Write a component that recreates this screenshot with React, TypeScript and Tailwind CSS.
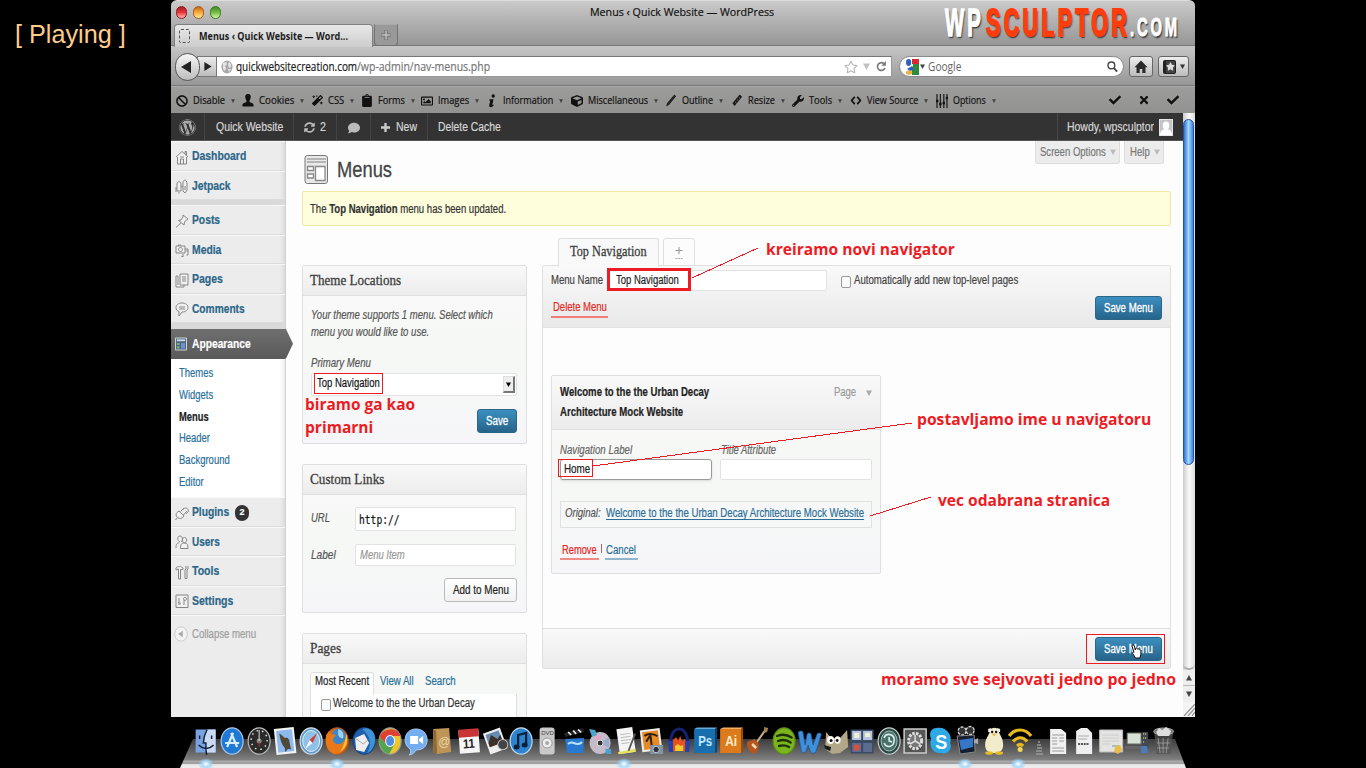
import React, { useLayoutEffect, useRef } from 'react';
import {
  FaBan, FaMagic, FaClipboard, FaRegImage, FaCube, FaWrench, FaCheck, FaTimes,
  FaWordpress, FaRegStar, FaSyncAlt, FaComment, FaStar,
} from 'react-icons/fa';

/* Single line of text condensed to the width of its own box. */
function Fit({ className = '', children }: { className?: string; children: React.ReactNode }) {
  const outer = useRef<HTMLSpanElement>(null);
  const inner = useRef<HTMLSpanElement>(null);
  useLayoutEffect(() => {
    const o = outer.current;
    const i = inner.current;
    if (o && i && i.offsetWidth > 0) {
      i.style.transform = `scaleX(${o.offsetWidth / i.offsetWidth})`;
    }
  }, [children]);
  return (
    <span ref={outer} className={`block shrink-0 whitespace-nowrap text-left ${className}`}>
      <span ref={inner} className="block w-max origin-left">{children}</span>
    </span>
  );
}

const Tri = ({ className = '' }: { className?: string }) => (
  <svg viewBox="0 0 6 6" className={`shrink-0 ${className}`}><path d="M0 0.5h6L3 6z" fill="currentColor" /></svg>
);

/* ---------- browser chrome ---------- */

const light = 'h-[13px] w-[11px] rounded-full border';

function TitleBar() {
  return (
    <div className="relative h-[46px] rounded-t-[6px] border-b border-[#777] border-t border-t-[#dedede] bg-linear-to-b from-[#cacaca] to-[#969696]">
      <div className="flex h-[22px] items-center pl-[5px]">
        <div className="flex w-[414px] gap-[6px]">
          <span className={`${light} border-[#8c1a1c] bg-linear-to-b from-[#a81e22] via-[#e8353b] to-[#ffb3b3]`} />
          <span className={`${light} border-[#a55b16] bg-linear-to-b from-[#c8661b] via-[#f9a93a] to-[#ffef9a]`} />
          <span className={`${light} border-[#3c7a1d] bg-linear-to-b from-[#3f8a26] via-[#76bf45] to-[#d5f5a5]`} />
        </div>
        <Fit className="w-[184px] font-['Open_Sans'] text-[11.5px] font-medium text-[#111] [-webkit-text-stroke:.2px_#111]">Menus ‹ Quick Website — WordPress</Fit>
      </div>
      <div className="flex h-[23px] pl-[3px]">
        <div className="mt-px flex h-[23px] w-[199px] items-center gap-[9px] rounded-t-[4px] border border-b-0 border-[#808080] bg-linear-to-b from-[#e8e8e8] to-[#cdcdcd] pl-[4px]">
          <span className="h-[14px] w-[11px] rounded-[2px] border border-dashed border-[#555]" />
          <Fit className="w-[149px] font-['Open_Sans'] text-[11px] font-bold text-[#1c1c1c]">Menus ‹ Quick Website — Word...</Fit>
        </div>
        <div className="mt-px ml-px flex h-[22px] w-[24px] items-center justify-center rounded-b-[4px] border border-t-[#aaa] border-[#737373] bg-[#999]">
          <svg viewBox="0 0 10 10" className="size-[10px]"><path d="M3.8 0h2.4v3.800H10v2.400H6.200V10H3.800V6.200H0V3.800h3.800z" fill="#bdbdbd" stroke="#555" strokeWidth=".6" /></svg>
        </div>
      </div>
      <div className="absolute left-[774px] top-0 flex items-baseline font-bold [text-shadow:2px_2px_2px_rgba(0,0,0,.7)]">
        <Fit className="mr-[2px] w-[39px] text-[38px] leading-[44px] tracking-[6px] text-white [-webkit-text-stroke:1.5px_#fff]">WP</Fit>
        <Fit className="w-[144px] text-[38px] leading-[44px] tracking-[6px] text-[#ff3d0c] [-webkit-text-stroke:2px_#ff3d0c]">SCULPTOR</Fit>
        <Fit className="w-[50px] text-[26px] leading-[30px] tracking-[5px] text-white [-webkit-text-stroke:1px_#fff]">.COM</Fit>
      </div>
    </div>
  );
}

function NavBar() {
  return (
    <div className="flex h-[40px] items-center border-b border-[#777] bg-linear-to-b from-[#c6c6c6] to-[#979797] pl-[4px] pt-[2px]">
      <div className="z-10 flex h-[28px] w-[25px] items-center justify-center rounded-full border border-[#555] bg-linear-to-b from-[#f6f6f6] to-[#bdbdbd] text-[#222]">
        <svg viewBox="0 0 10 12" className="mr-[3px] h-[14px] w-[10px]"><path d="M10 0v12L0 6z" fill="currentColor" /></svg>
      </div>
      <div className="-ml-[3px] flex h-[21px] w-[20px] items-center justify-center border border-[#777] bg-linear-to-b from-[#ededed] to-[#bcbcbc] text-[#222]">
        <svg viewBox="0 0 8 10" className="ml-[2px] h-[9px] w-[8px]"><path d="M0 0v10l8-5z" fill="currentColor" /></svg>
      </div>
      <div className="flex h-[21px] w-[675px] items-center border border-l-0 border-[#999] border-t-[#777] bg-white pl-[4px]">
        <svg viewBox="0 0 12 14" className="mr-[3px] h-[14px] w-[12px]">
          <ellipse cx="6" cy="7" rx="5.6" ry="6.4" fill="#a9a9a9" />
          <path d="M2 3l3-1 1 2-2 2 1 2-1 3-2-2zM8 2l2 2v3L8 8 7 5zM7 9l3 0-2 3z" fill="#e5e5e5" />
        </svg>
        <Fit className="mt-px w-[121px] font-['Open_Sans'] text-[12px] text-[#1b1b1b] [-webkit-text-stroke:.2px_#1b1b1b]">quickwebsitecreation.com</Fit>
        <Fit className="mt-px w-[133px] font-['Open_Sans'] text-[12px] text-[#777] [-webkit-text-stroke:.2px_#777]">/wp-admin/nav-menus.php</Fit>
        <div className="ml-auto flex items-center gap-[5px] pr-[4px]">
          <FaRegStar className="size-[14px] text-[#b9b9b9]" />
          <Tri className="size-[7px] text-[#c2c2c2]" />
          <svg viewBox="0 0 12 12" className="ml-px size-[11px]"><path d="M9.7 7.6A4.2 4.2 0 1 1 8.6 2.9" fill="none" stroke="#777" strokeWidth="1.8" /><path d="M10.8 0v5.2H5.9z" fill="#777" /></svg>
        </div>
      </div>
      <div className="ml-[7px] flex h-[21px] w-[225px] items-center rounded-full border border-[#888] bg-white pl-[5px]">
        <svg viewBox="0 0 14 16" className="h-[16px] w-[14px]">
          <path d="M7 0h7v5H7z" fill="#d8292f" /><path d="M8 5h6v11H7V8z" fill="#2d8c3c" />
          <path d="M0 3l5 8 3-4-3-6z" fill="#fff" /><ellipse cx="3.6" cy="3.5" rx="2.6" ry="3.4" fill="#2f5fc0" /><path d="M2 10l5-3 2 4-4 1z" fill="#2f5fc0" />
          <ellipse cx="4" cy="13.6" rx="3.2" ry="2.2" fill="#edb13a" />
        </svg>
        <Tri className="ml-px size-[5px] text-[#444]" />
        <Fit className="ml-[3px] mt-px w-[33px] font-['Open_Sans'] text-[12px] text-[#666]">Google</Fit>
        <svg viewBox="0 0 12 12" className="ml-auto mr-[5px] size-[11px]"><circle cx="4.8" cy="4.8" r="3.7" fill="none" stroke="#444" strokeWidth="1.5" /><path d="M7.4 7.6l3.6 4" stroke="#444" strokeWidth="2" /></svg>
      </div>
      <div className="ml-[5px] flex h-[21px] w-[24px] items-center justify-center rounded-[3px] border border-[#666] bg-linear-to-b from-[#eee] to-[#bcbcbc]">
        <svg viewBox="0 0 14 14" className="size-[14px]"><path d="M7 .5l6.500 6.700h-2V13H8.300V9H5.700v4H2.500V7.200h-2z" fill="#2a2a2a" /></svg>
      </div>
      <div className="ml-[5px] flex h-[21px] w-[31px] items-center justify-center gap-[4px] rounded-[3px] border border-[#666] bg-linear-to-b from-[#eee] to-[#bcbcbc]">
        <span className="flex h-[14px] w-[13px] items-center justify-center rounded-[2px] border border-l-3 border-[#222] bg-[#444]"><FaStar className="size-[9px] text-[#ddd]" /></span>
        <Tri className="size-[5px] text-[#333]" />
      </div>
    </div>
  );
}

const InfoIcon = () => <svg viewBox="0 0 12 14" className="h-[14px] w-[12px]"><circle cx="7.2" cy="2" r="1.7" fill="#111" /><path d="M3.5 5.2h4L6.2 11l1.5-.4-.3 1.2C6 13.6 3 13.8 3.2 11.6L4.3 6.6l-1 .2z" fill="#111" /></svg>;
const RulerIcon = () => <svg viewBox="0 0 12 14" className="h-[13px] w-[12px]"><path d="M1 10L9 .5 11.5 3 3.5 13z" fill="#1a1a1a" /><path d="M4 8.5l1.5 1.4M6 6l1.5 1.4M8 3.8L9.4 5" stroke="#999" strokeWidth=".8" /></svg>;
const SlidersIcon = () => <svg viewBox="0 0 12 14" className="h-[14px] w-[12px]"><path d="M1 0v14M4.4 0v14M7.8 0v14M11 0v14" stroke="#222" strokeWidth="1.3" /><path d="M0 7h2.4M3.2 10h2.4M6.6 9h2.4M9.8 4H12" stroke="#111" strokeWidth="2.4" /></svg>;
const PencilIcon = () => <svg viewBox="0 0 12 14" className="h-[13px] w-[12px]"><path d="M0.6 13.4l1.3-3.6L9.6.6l1.9 1.8-7.7 9.4z" fill="#222" /></svg>;
const PersonIcon = () => <svg viewBox="0 0 12 14" className="h-[13px] w-[12px]"><path d="M6 0c2.600 0 3.400 2.200 2.800 4.400C8.500 6 7.500 6.600 7.600 8.600c1.200 1 4.200.8 4.400 3.400v1.500H0V12c.2-2.600 3.200-2.400 4.400-3.400C4.500 6.600 3.500 6 3.200 4.400 2.600 2.200 3.400 0 6 0z" fill="#111" /></svg>;
const CodeIcon = () => <svg viewBox="0 0 12 10" className="h-[9px] w-[12px]"><path d="M4.600 1L1.200 5l3.400 4M7.400 1l3.400 4-3.400 4" fill="none" stroke="#111" strokeWidth="1.900" /></svg>;

const devItems = [
  { label: 'Disable', item: 'w-[66px]', text: 'w-[32px]', icon: <FaBan className="size-[12px]" /> },
  { label: 'Cookies', item: 'w-[69px]', text: 'w-[35px]', icon: <PersonIcon /> },
  { label: 'CSS', item: 'w-[50px]', text: 'w-[16px]', icon: <FaMagic className="size-[11px]" /> },
  { label: 'Forms', item: 'w-[60px]', text: 'w-[27px]', icon: <FaClipboard className="h-[13px] w-[12px]" /> },
  { label: 'Images', item: 'w-[65px]', text: 'w-[31px]', icon: <FaRegImage className="size-[12px]" /> },
  { label: 'Information', item: 'w-[85px]', text: 'w-[50px]', icon: <InfoIcon /> },
  { label: 'Miscellaneous', item: 'w-[94px]', text: 'w-[60px]', icon: <FaCube className="size-[12px]" /> },
  { label: 'Outline', item: 'w-[66px]', text: 'w-[31px]', icon: <PencilIcon /> },
  { label: 'Resize', item: 'w-[61px]', text: 'w-[27px]', icon: <RulerIcon /> },
  { label: 'Tools', item: 'w-[58px]', text: 'w-[23px]', icon: <FaWrench className="size-[12px]" /> },
  { label: 'View Source', item: 'w-[86px]', text: 'w-[51px]', icon: <CodeIcon /> },
  { label: 'Options', item: 'w-[65px]', text: 'w-[33px]', icon: <SlidersIcon /> },
];

function DevBar() {
  return (
    <div className="flex h-[27px] items-center border-t border-[#aaa] bg-linear-to-b from-[#9c9c9a] to-[#929290] pl-[5px] text-[#111]">
      {devItems.map((d) => (
        <div key={d.label} className={`flex shrink-0 items-center pt-px ${d.item}`}>
          <span className="mr-[5px] flex w-[12px] justify-center">{d.icon}</span>
          <Fit className={`font-['Open_Sans'] text-[10.5px] font-medium [-webkit-text-stroke:.2px_#111] ${d.text}`}>{d.label}</Fit>
          <Tri className="ml-[6px] size-[4px] text-[#444]" />
        </div>
      ))}
      <div className="ml-auto flex items-center gap-[17px] pr-[16px]">
        <FaCheck className="size-[12px]" /><FaTimes className="size-[12px]" /><FaCheck className="size-[12px]" />
      </div>
    </div>
  );
}

/* ---------- WordPress ---------- */

function AdminBar() {
  const cell = 'flex h-full shrink-0 items-center border-r border-[#444] pt-[2px]';
  return (
    <div className="flex h-[28px] shrink-0 items-center border-b border-[#555] bg-[#333] text-[12.5px] text-[#d6d6d6]">
      <div className={`${cell} w-[34px] justify-center`}><FaWordpress className="h-[19px] w-[17px] text-[#aaa]" /></div>
      <div className={`${cell} w-[89px] pl-[11px]`}><Fit className="w-[67px]">Quick Website</Fit></div>
      <div className={`${cell} w-[43px] gap-[5px] pl-[10px]`}><FaSyncAlt className="size-[11px] text-[#bbb]" /><Fit className="w-[6px]">2</Fit></div>
      <div className={`${cell} w-[34px] justify-center`}><FaComment className="mt-px h-[14px] w-[12px] text-[#bbb]" /></div>
      <div className={`${cell} w-[57px] pl-[10px]`}>
        <svg viewBox="0 0 10 10" className="mr-[6px] size-[9px]"><path d="M5 0v10M0 5h10" stroke="#ccc" strokeWidth="2.6" /></svg>
        <Fit className="w-[21px]">New</Fit>
      </div>
      <Fit className="ml-[10px] w-[63px] pt-[2px]">Delete Cache</Fit>
      <div className="ml-auto flex h-full w-[126px] items-center border-l border-[#484848] pl-[9px] pt-px">
        <Fit className="w-[87px]">Howdy, wpsculptor</Fit>
        <svg viewBox="0 0 14 17" className="ml-[5px] h-[17px] w-[14px]"><path d="M0 0h14v17H0z" fill="#c4c4c4" /><ellipse cx="7" cy="6.5" rx="3.3" ry="4" fill="#fff" /><path d="M1 16c0-4 2.500-6 6-6s6 2 6 6z" fill="#fff" /><path d="M.5.5h13v16H.5z" fill="none" stroke="#e6e6e6" /></svg>
      </div>
    </div>
  );
}

const ic = (d: string) => (
  <svg viewBox="0 0 14 16" className="h-[16px] w-[14px] shrink-0"><path d={d} fill="#f1f1f1" stroke="#858585" strokeWidth="1" strokeLinejoin="round" /></svg>
);
const icons: Record<string, React.ReactNode> = {
  Dashboard: ic('M1 8l6-5.500L13 8M2.500 8v7h9V8M5.500 15v-5h3v5M10 5V2.500h1.500v4M5 8h4'),
  Jetpack: ic('M2 6c0-3 4-3 4 0v7H2zM8 5c0-4 4-4 4 1v6l-2 3-2-2zM1 9v5M6 8l2 1M4 14v1.500M10 8v4'),
  Posts: ic('M8 2l5 4-1.500.8L9.500 9l-.5 3L3.500 7.500 6 7l2-3zM6 9.800L1 14.500'),
  Media: ic('M1 4h9v7H1zM3 3h3M5.500 5.500a2 2 0 1 0 .1 0M10 7h3v6M8 15v-3M8 14.500h-1.500M13 13h-1.500M11 9h2'),
  Pages: ic('M5 2h8v11H5zM3 4H1v11h8v-2M3 4v9M7 5h4M7 7h4M7 9h4'),
  Comments: ic('M7 2c3.500 0 6 2 6 4.500S10.500 11 7 11L4 15v-4.500C2 10 1 8.500 1 6.500 1 4 3.500 2 7 2zM4 6h6M4 8h6'),
  Plugins: ic('M4 6l5 5-2 2c-2 1-4 0-5-1s-1.500-3 0-4.500zM2 13l-1.500 2M5.500 6.500L9 3M8.500 10L12 6M8 4.500c2-2 4-2 5 0s0 3-2 4'),
  Users: ic('M5 8c-3-1-3-6 0-6s3 5 1 6M1 14c0-4 1-5 3-5M9.500 9c-3-1-2.500-5.500 0-5.500s3 4.500 0 5.500c3 0 3.500 2 3.500 5.500H5.500C5.500 11 6 9 9.500 9'),
  Tools: ic('M1 4c2-2 5-2 7 0v1.500H5.500V15H3.500V5L1 6zM11 2v3l-1 1v8.500h2V6l1-1V2'),
  Settings: ic('M1 2h12v12.500H1zM4 5v7M4 9.500h-1M5 9.500v2M9 7v5M9 7a1.500 1.500 0 1 0-.1-.1'),
};

type Entry = { label: string; w: string; sepBefore?: boolean };
const top1: Entry[] = [
  { label: 'Dashboard', w: 'w-[54px]' },
  { label: 'Jetpack', w: 'w-[39px]' },
  { label: 'Posts', w: 'w-[28px]', sepBefore: true },
  { label: 'Media', w: 'w-[29px]' },
  { label: 'Pages', w: 'w-[31px]' },
  { label: 'Comments', w: 'w-[53px]' },
];
const top2: Entry[] = [
  { label: 'Plugins', w: 'w-[37px]' },
  { label: 'Users', w: 'w-[28px]' },
  { label: 'Tools', w: 'w-[27px]' },
  { label: 'Settings', w: 'w-[41px]' },
];
const subs = [
  ['Themes', 'w-[34px]'], ['Widgets', 'w-[34px]'], ['Menus', 'w-[30px]'],
  ['Header', 'w-[31px]'], ['Background', 'w-[51px]'], ['Editor', 'w-[25px]'],
];

function SideItem({ e }: { e: Entry }) {
  return (
    <>
      {e.sepBefore && <div className="h-[5px] bg-[#d9d9d9]" />}
      <div className="flex h-[29.5px] items-center border-b border-b-[#dcdcdc] border-t border-t-[#f8f8f8] pl-[4px] pt-[2px]">
        {icons[e.label]}
        <Fit className={`ml-[3px] text-[12.5px] font-bold text-[#2b6688] ${e.w}`}>{e.label}</Fit>
        {e.label === 'Plugins' && <span className="ml-[6px] flex h-[16px] w-[14px] items-center justify-center rounded-full bg-[#333] text-[9px] font-bold text-white">2</span>}
      </div>
    </>
  );
}

function Sidebar() {
  return (
    <div className="relative z-10 w-[115px] shrink-0 border-r border-[#d2d2d2] bg-[#ececec] shadow-[inset_-6px_0_5px_-5px_rgba(0,0,0,.12)]">
      {top1.map((e) => <SideItem key={e.label} e={e} />)}
      <div className="h-[6px] bg-[#d9d9d9]" />
      <div className="relative flex h-[29.5px] items-center bg-linear-to-b from-[#6f6f6f] to-[#595959] pl-[4px]">
        <svg viewBox="0 0 13 14" className="h-[14px] w-[12px]"><path d="M.5.5h12v13H.5z" fill="#496583" stroke="#ddd" /><path d="M2 3h9" stroke="#d3dde5" strokeWidth="2" /><path d="M2 6h3v2H2zM2 9.500h3V12H2z" fill="#82b26b" /><path d="M6.500 6H11v6H6.500z" fill="#6d91cf" /></svg>
        <Fit className="ml-[5px] w-[59px] pt-px text-[12px] font-bold text-white">Appearance</Fit>
        <svg viewBox="0 0 8 30" preserveAspectRatio="none" className="absolute left-[114px] top-0 h-full w-[8px]">
          <defs><linearGradient id="arrow" x1="0" y1="0" x2="0" y2="1"><stop offset="0" stopColor="#6f6f6f" /><stop offset="1" stopColor="#595959" /></linearGradient></defs>
          <path d="M0 0h1l7 15-7 15H0z" fill="url(#arrow)" />
        </svg>
      </div>
      <div className="h-[138.5px] bg-white pl-[8px] pt-[4.5px] shadow-[inset_-6px_0_5px_-5px_rgba(0,0,0,.12)]">
        {subs.map(([label, w]) => (
          <Fit key={label} className={`h-[21.75px] text-[12.5px] leading-[21.75px] ${w} ${label === 'Menus' ? 'font-bold text-[#222]' : 'text-[#2b6f99]'}`}>{label}</Fit>
        ))}
      </div>
      {top2.map((e) => <SideItem key={e.label} e={e} />)}
      <div className="flex h-[36px] items-center border-t border-[#f8f8f8] pl-[3px]">
        <svg viewBox="0 0 14 16" className="h-[16px] w-[14px]"><ellipse cx="7" cy="8" rx="6.3" ry="7.2" fill="#f3f3f3" stroke="#ccc" /><path d="M8.800 4.800v6.400L4 8z" fill="#aaa" /></svg>
        <Fit className="ml-[4px] w-[64px] text-[12px] text-[#9c9c9c]">Collapse menu</Fit>
      </div>
    </div>
  );
}

const boxHead = "flex items-center border-b border-[#dfdfdf] bg-linear-to-b from-[#f9f9f9] to-[#ececec] pb-[2px] pl-[7px] font-['Liberation_Serif',serif] text-[15.5px] text-[#3c3c3c] [-webkit-text-stroke:.3px_#3c3c3c]";
const box = 'shrink-0 rounded-[2px] border border-[#dfdfdf] bg-linear-to-b from-[#f9f9fa] via-[#f6f8f5] to-[#f6f6f9]';
const blueBtn = 'flex h-[24px] items-center justify-center rounded-[3px] border border-[#2b6688] bg-linear-to-b from-[#3c8fc0] to-[#27648a] text-[12px] font-medium text-white [-webkit-text-stroke:.3px_#fff]';
const field = 'rounded-[2px] border border-[#e2e2e2] bg-white';

function LeftColumn() {
  return (
    <div className="mt-[39px] w-[225px] shrink-0 text-[12.5px] text-[#555]">
      <div className={`${box} h-[179px]`}>
        <div className={`${boxHead} h-[30px]`}><Fit className="w-[91px]">Theme Locations</Fit></div>
        <div className="pl-[8px] pt-[11px] italic">
          <Fit className="w-[182px] leading-[17px]">Your theme supports 1 menu. Select which</Fit>
          <Fit className="w-[118px] leading-[17px]">menu you would like to use.</Fit>
          <Fit className="mt-[14px] w-[60px] leading-[17px]">Primary Menu</Fit>
        </div>
        <div className={`${field} ml-[8px] mt-[1px] flex h-[23px] w-[206px] items-center justify-between pl-[5px] text-[#111]`}>
          <Fit className="mb-[3px] w-[63px]">Top Navigation</Fit>
          <span className="mr-px flex h-[17px] w-[12px] items-center justify-center border border-r-2 border-b-2 border-[#ddd] border-r-[#777] border-b-[#777] bg-[#eee]"><Tri className="size-[5px] text-black" /></span>
        </div>
        <div className="flex justify-end pr-[9px] pt-[13px]"><div className={`${blueBtn} w-[40px]`}><Fit className="w-[22px]">Save</Fit></div></div>
      </div>
      <div className={`${box} mt-[20px] h-[149px]`}>
        <div className={`${boxHead} h-[30px]`}><Fit className="w-[74px]">Custom Links</Fit></div>
        <div className="flex items-center pl-[8px] pt-[12px] italic">
          <Fit className="mb-[2px] mr-[25px] w-[19px]">URL</Fit>
          <div className={`${field} flex h-[24px] w-[161px] items-center pl-[3px] not-italic`}><Fit className="w-[41px] pt-px font-['DejaVu_Sans_Mono'] text-[12px] text-[#111]">http://</Fit></div>
        </div>
        <div className="flex items-center pl-[8px] pt-[13px] italic">
          <Fit className="mr-[19px] w-[25px] pt-px">Label</Fit>
          <div className={`${field} flex h-[22px] w-[161px] items-center pl-[4px]`}><Fit className="w-[45px] text-[12px] text-[#999]">Menu Item</Fit></div>
        </div>
        <div className="flex justify-end pr-[9px] pt-[12px]"><div className="flex h-[24px] w-[73px] items-center justify-center rounded-[3px] border border-[#bbb] bg-linear-to-b from-white to-[#f1f1f1] text-[#222]"><Fit className="w-[56px]">Add to Menu</Fit></div></div>
      </div>
      <div className={`${box} mt-[20px] h-[100px]`}>
        <div className={`${boxHead} h-[30px]`}><Fit className="w-[31px]">Pages</Fit></div>
        <div className="flex h-[30px] items-end pl-[7px] text-[#2b6f99]">
          <div className="-mb-px flex h-[23px] w-[64px] items-center justify-center rounded-t-[3px] border border-b-0 border-[#dfdfdf] bg-white pb-[5px] text-[#222]"><Fit className="w-[54px]">Most Recent</Fit></div>
          <Fit className="mb-[5px] ml-[6px] w-[34px] leading-[16px]">View All</Fit>
          <Fit className="mb-[5px] ml-[11px] w-[31px] leading-[16px]">Search</Fit>
        </div>
        <div className="ml-[7px] flex h-[40px] w-[207px] items-start border border-t-0 border-[#dfdfdf] bg-white pl-[10px] text-[#333]">
          <span className="mr-[2px] mt-[5px] h-[12px] w-[10px] rounded-[2px] border border-[#999] bg-[#fafafa]" />
          <Fit className="w-[142px] leading-[18px]">Welcome to the the Urban Decay</Fit>
        </div>
      </div>
    </div>
  );
}

function MenuItem() {
  return (
    <div className={`${box} ml-[8px] mt-[47px] h-[199px] w-[330px]`}>
      <div className="flex h-[54px] justify-between border-b border-[#dfdfdf] bg-linear-to-b from-[#f9f9f9] to-[#ececec] pl-[8px] pt-[7px]">
        <div className="font-bold text-[#222]">
          <Fit className="w-[149px] leading-[19.5px]">Welcome to the the Urban Decay</Fit>
          <Fit className="w-[123px] leading-[19.5px]">Architecture Mock Website</Fit>
        </div>
        <div className="flex h-[19px] items-center gap-[10px] pr-[8px] text-[#999]"><Fit className="w-[22px]">Page</Fit><Tri className="size-[6px] text-[#aaa]" /></div>
      </div>
      <div className="flex pl-[8px] pt-[11px] italic text-[#666]">
        <Fit className="w-[72px] leading-[18px]">Navigation Label</Fit>
        <Fit className="ml-[89px] w-[55px] leading-[18px]">Title Attribute</Fit>
      </div>
      <div className="flex gap-[8px] pl-[8px]">
        <div className="flex h-[21px] w-[152px] items-center rounded-[3px] border border-[#999] bg-white pl-[3px] text-[#222] shadow-sm"><Fit className="w-[26px]">Home</Fit></div>
        <div className={`${field} h-[21px] w-[152px]`} />
      </div>
      <div className="ml-[8px] mt-[21px] flex h-[27px] w-[312px] items-center border border-[#e0e0e0] pb-[2px] pl-[4px]">
        <Fit className="w-[36px] italic text-[#555]">Original:</Fit>
        <Fit className="ml-[5px] w-[258px] text-[#2b6f99] underline underline-offset-2">Welcome to the the Urban Decay Architecture Mock Website</Fit>
      </div>
      <div className="flex pl-[8px] pt-[14px]">
        <div className="flex w-[39px] justify-center border-b-2 border-[#ef8a84] pr-px text-[#e8221b]"><Fit className="w-[35px] leading-[16px]">Remove</Fit></div>
        <div className="ml-[2px] mt-[2px] h-[9px] w-px bg-[#a66]" />
        <div className="ml-[3px] flex w-[33px] justify-center border-b-2 border-[#90b4ca] pr-px text-[#2b6f99]"><Fit className="w-[30px] leading-[16px]">Cancel</Fit></div>
      </div>
    </div>
  );
}

function RightColumn() {
  return (
    <div className="ml-[15px] mt-[12px] w-[629px] shrink-0 text-[12.5px] text-[#444]">
      <div className="relative z-10 -mb-px flex h-[28px] gap-[4px] pl-[16px] font-['Liberation_Serif',serif]">
        <div className="flex w-[101px] items-center justify-center rounded-t-[3px] border border-b-0 border-[#dfdfdf] bg-[#f9f9f9] pb-[3px] text-[15px] text-[#3c3c3c] [-webkit-text-stroke:.3px_#3c3c3c]"><Fit className="w-[77px]">Top Navigation</Fit></div>
        <div className="flex w-[32px] items-center justify-center rounded-t-[3px] border border-[#dfdfdf] bg-[#fcfcfc]">
          <svg viewBox="0 0 8 14" className="mt-[2px] h-[14px] w-[8px]"><path d="M4 1v7M.5 4.500h7" stroke="#999" strokeWidth="1.1" /><path d="M.5 12.500h7" stroke="#aaa" strokeDasharray="2 .7" /></svg>
        </div>
      </div>
      <div className="h-[404px] rounded-[2px] border border-[#dfdfdf] bg-[#fdfdfd]">
        <div className="h-[62px] border-b border-[#e3e3e3] bg-linear-to-b from-[#f9f9f9] to-[#e9e9e9]">
          <div className="flex h-[28px] items-center pl-[8px]">
            <Fit className="mt-px w-[52px]">Menu Name</Fit>
            <div className={`${field} ml-[4px] flex h-[21px] w-[220px] items-center pl-[8px] text-[#222]`}><Fit className="w-[63px]">Top Navigation</Fit></div>
            <span className="ml-[14px] mr-[3px] mt-[3px] h-[12px] w-[10px] rounded-[2px] border border-[#999] bg-[#fafafa]" />
            <Fit className="mt-px w-[164px]">Automatically add new top-level pages</Fit>
          </div>
          <div className="flex items-start justify-between pl-[8px] pr-[8px] pt-[2px]">
            <div className="mt-[3px] flex w-[57px] justify-center border-b-2 border-[#ef7e79] text-[#df2a22]"><Fit className="w-[54px] leading-[17px]">Delete Menu</Fit></div>
            <div className={`${blueBtn} w-[67px]`}><Fit className="w-[49px]">Save Menu</Fit></div>
          </div>
        </div>
        <MenuItem />
        <div className="mt-[54px] flex h-[40px] items-center justify-end border-t border-[#dfdfdf] bg-linear-to-b from-[#f9f9f9] to-[#ebebeb] pr-[8px] pt-px">
          <div className={`${blueBtn} w-[67px]`}><Fit className="w-[49px]">Save Menu</Fit></div>
        </div>
      </div>
    </div>
  );
}

function Content() {
  return (
    <div className="relative flex-1 overflow-hidden bg-[#fdfdfd] pl-[16px]">
      <div className="flex h-[50px] items-start">
        <svg viewBox="0 0 25 30" className="ml-[2px] mt-[13px] h-[31px] w-[25px]">
          <rect x="1" y="1" width="22.5" height="28" rx="2.5" fill="#e9e9e9" stroke="#777" />
          <path d="M3 4.500h19M3 7.500h19" stroke="#b5b5b5" strokeWidth="2" />
          <path d="M3.500 12h6v4h-6zM3.500 19.500h6v4h-6zM11.500 12h9.500v14h-9.500z" fill="#fff" stroke="#888" strokeWidth="1.3" />
        </svg>
        <Fit className="ml-[8px] mt-[15px] w-[55px] text-[22px] leading-[28px] text-[#444] [-webkit-text-stroke:.3px_#444]">Menus</Fit>
        <div className="ml-auto mr-[19px] flex gap-[4px] text-[12px] text-[#777]">
          <div className="flex h-[23px] w-[85px] items-center rounded-b-[3px] border border-t-0 border-[#ddd] bg-[#ececec] pl-[4px]"><Fit className="mr-[4px] w-[66px]">Screen Options</Fit><Tri className="size-[6px] text-[#bbb]" /></div>
          <div className="flex h-[23px] w-[40px] items-center rounded-b-[3px] border border-t-0 border-[#ddd] bg-[#ececec] pl-[5px]"><Fit className="mr-[4px] w-[20px]">Help</Fit><Tri className="size-[6px] text-[#bbb]" /></div>
        </div>
      </div>
      <div className="flex h-[35px] w-[869px] items-center rounded-[2px] border border-[#eee7a8] bg-[#fefddc] pl-[7px] pt-[2px] text-[12.5px] text-[#333]">
        <Fit className="w-[196px]">The <b>Top Navigation</b> menu has been updated.</Fit>
      </div>
      <div className="flex items-start">
        <LeftColumn />
        <RightColumn />
      </div>
    </div>
  );
}

function Scrollbar() {
  return (
    <div className="flex w-[12px] shrink-0 flex-col bg-linear-to-r from-[#ccc] via-[#fafafa] to-[#ddd] pt-[6px]">
      <div className="h-[346px] w-[11px] rounded-full border border-[#1f54b5] bg-linear-to-r from-[#2f6fd6] via-[#a5d8fb] to-[#3a84e4]" />
      <div className="h-[205px] rounded-b-full border-b-2 border-[#aaa]" />
      <div className="flex h-[16px] items-center justify-center border-b border-[#bbb] bg-[#eee]"><Tri className="size-[6px] rotate-180 text-[#444]" /></div>
      <div className="flex h-[16px] items-center justify-center bg-[#eee]"><Tri className="size-[6px] text-[#444]" /></div>
      <div className="flex-1 bg-[#f5f5f5]"><svg viewBox="0 0 12 14" className="h-[14px] w-[12px]"><path d="M1 14L12 2M5 14l7-8M9 14l3-4" stroke="#999" strokeWidth="1.3" /></svg></div>
    </div>
  );
}

/* ---------- dock ---------- */

const I = ({ children }: { children: React.ReactNode }) => (
  <svg viewBox="0 0 26 30" className="h-[30px] w-[26.25px] shrink-0 overflow-visible">{children}</svg>
);
const Round = ({ fill, stroke = '#ccc' }: { fill: string; stroke?: string }) => <ellipse cx="13" cy="15" rx="11" ry="13.2" fill={fill} stroke={stroke} strokeWidth="1.2" />;
const f = 'Liberation Sans, sans-serif';

const dockIcons: React.ReactNode[] = [
  <><path d="M2.500 3.500h20v23h-20z" fill="#78a2e0" /><path d="M14 3.500h8.500v23H13c-.5-4-.5-7-.3-9h-2.500C10.500 11 12 7 14 3.500z" fill="#c9daf2" /><path d="M14 3.500C11.500 8 10.500 12 10.200 17h2.600c-.3 4 0 8 .7 12M6.500 9.500v3.500M18.500 9.500v3.500M5.500 19c4.500 4.500 10.500 4.500 15 0" fill="none" stroke="#16233f" strokeWidth="1.5" /></>,
  <><Round fill="#1e78d4" stroke="#aac8e8" /><path d="M8 21L14 7M18 21L12 7M6 17h14" stroke="#d7ecff" strokeWidth="2.2" /></>,
  <><Round fill="#2b2b2b" stroke="#bbb" /><ellipse cx="13" cy="14" rx="8" ry="9.5" fill="none" stroke="#eee" strokeWidth="1.4" strokeDasharray="1.5 4" /><circle cx="13" cy="15" r="2.5" fill="#888" /><path d="M13 15V4" stroke="#ddd" /><path d="M13 15v6" stroke="#a33" /></>,
  <g transform="rotate(-6 13 15)"><path d="M3 2h20v26H3z" fill="#f2f2f2" /><path d="M5 4h16v22H5z" fill="#8eb9ed" /><path d="M8 7c2 1 4 4 5 5 2-1 3 0 4 2l1 10-3-1-3 3 0-4c-3-4-4-10-4-15z" fill="#4f4938" /></g>,
  <><Round fill="#5b9bcf" stroke="#d7dde2" /><ellipse cx="13" cy="15" rx="8.5" ry="10.5" fill="#8dc1e8" stroke="#e8eef2" /><path d="M19 7l-4.500 10-3-3z" fill="#d53a2b" /><path d="M7 23l4.500-9 3 3z" fill="#f4f4f4" /></>,
  <><Round fill="#df6b16" stroke="#c4510e" /><ellipse cx="14.5" cy="12" rx="7.5" ry="9.5" fill="#3a86c8" /><path d="M14 3c4 1 6 4 5 9-2 1-4-1-5-3z" fill="#9fd2f1" /><path d="M2 9l3-4 2 3 5 1c-1 2-4 3-3 6 3 5 9 4 12-2 3 6-2 15-9 15S0 20 2 9z" fill="#e87818" /><path d="M22 8c3 7 0 14-6 18 3-5 5-10 6-18z" fill="#f6c432" /></>,
  <><Round fill="#1f61ad" stroke="#16467f" /><path d="M11 3c8-3 13 3 13 10s-4 13-8 14c4-6 5-16-5-24z" fill="#3e93d7" /><path d="M4 12l9-4 5 9-5 9-8-2z" fill="#eee" /><path d="M4 12l8 6 5-4" fill="none" stroke="#aaa" /></>,
  <><Round fill="#eec52d" stroke="#999" /><path d="M2.500 11C5 2 20 0 23.300 10H13l-5 7z" fill="#dd4234" /><path d="M2.500 11C1 20 6 27 12 28l5-9-9-2z" fill="#51a550" /><ellipse cx="13" cy="15" rx="5" ry="6" fill="#fff" /><ellipse cx="13" cy="15" rx="4" ry="4.9" fill="#4d8ee0" /></>,
  <><path d="M13 3c6 0 11 4 11 11s-5 10-11 10c-1 2-4 5-7 5 2-2 2-4 1-6-3-2-5-5-5-9C2 7 7 3 13 3z" fill="#74aef0" stroke="#a9cdf5" /><path d="M7 10h8v8H7zM16 13l4-3v8l-4-3z" fill="#fff" /></>,
  <><path d="M4 3l16-1 2 24-14 2-4-2z" fill="#be9556" /><path d="M4 3l3 2 1 23-4-2z" fill="#8f6a34" /><text x="9" y="20" fontSize="12" fill="#ead5a8" fontFamily={f}>@</text></>,
  <g transform="rotate(-4 13 15)"><path d="M3 4h20v23H3z" fill="#f5f5f5" /><path d="M3 3h20v8H3z" fill="#c93434" /><text x="6.5" y="22" fontSize="13" fontWeight="bold" fill="#222" fontFamily={f} textLength="12" lengthAdjust="spacingAndGlyphs">11</text></g>,
  <g transform="rotate(-20 13 15)"><path d="M4 4h18v22H4z" fill="#eee" /><path d="M6 6h14v13H6z" fill="#668cb5" /><path d="M6 15l5-7 5 6 4-3v8H6z" fill="#3c3029" /><circle cx="19" cy="21" r="5" fill="#444" stroke="#bbb" /></g>,
  <><Round fill="#2c83cf" stroke="#c7d9e8" /><path d="M10 21V9l8-2v12" fill="none" stroke="#0c1f38" strokeWidth="2.2" /><ellipse cx="8.5" cy="21" rx="3" ry="2.5" fill="#0c1f38" /><ellipse cx="16.5" cy="19" rx="3" ry="2.5" fill="#0c1f38" /></>,
  <><rect x="5.5" y="1.5" width="15" height="27" rx="3" fill="#c9c9c9" /><text x="7" y="9" fontSize="6" fill="#444" fontFamily={f}>DVD</text><circle cx="13" cy="17" r="5" fill="#eee" stroke="#999" /><circle cx="13" cy="17" r="2" fill="#aaa" /></>,
  <><path d="M4 13l19-1-1 15H6z" fill="#287ad0" /><path d="M3 7l19-5 1 4L4 11z" fill="#222" /><path d="M7 6l3 3M12 4.500l3 3.500M17 3.500l3 3" stroke="#eee" strokeWidth="1.7" /><path d="M7 18c5-5 8 4 14-2" stroke="#bfe3ff" fill="none" strokeWidth="2" /></>,
  <><ellipse cx="13" cy="17" rx="10.5" ry="11" fill="#c4bcc8" /><path d="M13 17L22 11v11z" fill="#9ac" /><path d="M13 17L5 9h9z" fill="#e7a8c6" /><circle cx="13" cy="17" r="3" fill="#333" stroke="#eee" /><path d="M2 3l6 1 2 5-5 2z" fill="#4ba6cb" /><path d="M18 23h6v5h-5z" fill="#4aa0cf" /></>,
  <g transform="rotate(-8 13 15)"><path d="M5 2h16v25H5z" fill="#f4f4f4" /><path d="M3 25l18-1v3H4z" fill="#e6e05a" /><path d="M8 8h10M8 11h10M8 14h10M8 17h8" stroke="#bbb" /><path d="M23 9L14 25" stroke="#555" strokeWidth="1.8" /></g>,
  <><g transform="rotate(-7 13 15)"><path d="M2 3h20v22H2z" fill="#eee" /><path d="M4 5h16v18H4z" fill="#e68a25" /><path d="M12 22V9M6 9c3-2 9-2 13 2M12 9l-5 6" stroke="#30200e" strokeWidth="2" fill="none" /></g><path d="M11 19h13v9H11z" fill="#8591a1" /><circle cx="17" cy="23.5" r="3.2" fill="#2a3342" stroke="#ccc" /></>,
  <><path d="M5 24c-5-28 21-28 16 0" fill="none" stroke="#14226f" strokeWidth="3" /><path d="M2 15h5v11H3zM19 15h5l-1 11h-4z" fill="#2540aa" /><path d="M7 25V14l3-3 2 4 2-5 2 5 3-2v12z" fill="#e8501c" /><path d="M9 25v-5l3-2 2 2 3-1v6z" fill="#f9c72f" /></>,
  <><path d="M2 3h21v24H2z" fill="#196eae" /><path d="M2 3l3-1.500h20L23 3z" fill="#68acdb" /><path d="M23 3l2-1.500V26l-2 1z" fill="#0e4674" /><text x="6" y="20" fontSize="14" fontWeight="bold" fill="#c4e9ff" fontFamily={f} textLength="14" lengthAdjust="spacingAndGlyphs">Ps</text></>,
  <><path d="M2 3h21v24H2z" fill="#dc7a1c" /><path d="M2 3l3-1.500h20L23 3z" fill="#f5ad64" /><path d="M23 3l2-1.500V26l-2 1z" fill="#9c4d0c" /><text x="7" y="20" fontSize="14" fontWeight="bold" fill="#ffedc8" fontFamily={f} textLength="12" lengthAdjust="spacingAndGlyphs">Ai</text></>,
  <><path d="M22 3L12 17" stroke="#cdb18a" strokeWidth="2" /><path d="M20 1l4 1-1 4-3 1z" fill="#a88050" /><path d="M3 16c3-3 5 0 7-3l5 5c-1 3 0 5-3 9-4 2-10-2-9-11z" fill="#b4551d" /><path d="M8 18l4 4" stroke="#f5deb8" strokeWidth="2.5" /></>,
  <><Round fill="#7ab51e" stroke="#5c8c12" /><path d="M6 10c5-2 10-1.500 14.500 1.500M7 15c4-1.500 9-1 12.500 1.500M8 20c3.500-1 7-.7 10 1" fill="none" stroke="#1d3008" strokeWidth="2.4" strokeLinecap="round" /></>,
  <path d="M1 6c3-2 5-1 5 1l2 12 2-11c2-2 4-1 4 1l2 10 4-11c1-2 5-1 4 1l-5 16c-1 3-5 3-6 0l-2-6-2 6c-1 3-5 2-5-1z" fill="#3f8fdb" stroke="#1a5596" strokeWidth=".7" />,
  <><path d="M3 6l5 6 9 0 7-8 1 17-8 6-8 1-7-5z" fill="#b3a789" /><ellipse cx="7.5" cy="14" rx="3.5" ry="4" fill="#fff" /><ellipse cx="14.5" cy="14" rx="3" ry="3.7" fill="#fff" /><circle cx="8" cy="14.5" r="1.5" fill="#111" /><circle cx="14" cy="14.5" r="1.4" fill="#111" /><path d="M1 19l7 2-1 4-5-2z" fill="#1c1c1c" /></>,
  <><rect x="1.5" y="3.5" width="23" height="24" fill="#3d4a66" /><path d="M3 5h9v9H3zM14 5h9v9h-9z" fill="#b7c5e0" /><path d="M3 17h9v9H3zM14 17h9v9h-9z" fill="#5c6c8f" /><circle cx="7.5" cy="21.5" r="3.2" fill="#cf5340" /><path d="M5 7h5v5H5zM16 7h5v4h-5z" fill="#eef2ce" /></>,
  <><Round fill="#2b4742" stroke="#c4cccb" /><ellipse cx="13" cy="15" rx="8" ry="10" fill="#49716c" stroke="#a8bfba" /><path d="M8 12c2-6 11-4 10 3s-8 7-10 2M13 11v4l3 1" fill="none" stroke="#dcefe9" strokeWidth="1.6" /></>,
  <><path d="M2 3h22v24H2z" fill="#555" stroke="#ccc" strokeWidth="1.5" /><ellipse cx="13" cy="15" rx="6.5" ry="7.8" fill="#777" stroke="#ddd" strokeWidth="3" strokeDasharray="2.5 1.3" /><path d="M13 15V9M13 15l5 3M13 15l-5 3" stroke="#ddd" strokeWidth="1.5" /></>,
  <><path d="M8 2c10-2 17 7 14 15 3 7-4 12-9 10C3 28 1 18 3 13 0 6 4 2 8 2z" fill="#2da9e5" /><text x="7" y="22.5" fontSize="21" fontWeight="bold" fill="#fff" fontFamily={f} textLength="12" lengthAdjust="spacingAndGlyphs">S</text></>,
  <><circle cx="8" cy="5" r="4" fill="#333" stroke="#ddd" strokeWidth="1.3" strokeDasharray="3 1.2" /><circle cx="16" cy="4.5" r="4" fill="#333" stroke="#ddd" strokeWidth="1.3" strokeDasharray="3 1.2" /><path d="M3 10l17-1 1 17-15 2z" fill="#161e2f" stroke="#888" /><path d="M5 14l14-2v9l-12 3z" fill="#3577c5" /><path d="M20 14l4-2v6l-4-1z" fill="#aaa" /></>,
  <><path d="M9 4c2-3 7-3 8 0 2 6 5 8 5 15 0 6-4 8-9 8s-9-2-9-8c0-7 4-9 5-15z" fill="#f1ecc9" /><path d="M7 3l3-1v4H7zM16 2l3 1v3h-3z" fill="#eee" /><circle cx="11" cy="6" r="1.2" fill="#111" /><circle cx="15" cy="6" r="1.2" fill="#111" /><path d="M11 8h4l-2 2z" fill="#e3a91f" /><ellipse cx="8" cy="27" rx="4" ry="1.8" fill="#e8bb25" /><ellipse cx="18" cy="27" rx="4" ry="1.8" fill="#e8bb25" /></>,
  <><path d="M2 10c6-8 16-8 22 0M6 15.500c4-5 10-5 14 0M10 20c2-2 4-2 6 0" fill="none" stroke="#e7b91d" strokeWidth="3.2" /><circle cx="13" cy="23.5" r="2.5" fill="#f4d65c" /></>,
];

const dockRight: React.ReactNode[] = [
  <><path d="M5 3h11l5 4v21H5z" fill="#f0f0f0" /><path d="M7 9h12M7 12h5M7 15h5M7 18h5M14 12h5M14 15h5M7 22h12M7 25h12" stroke="#999" strokeWidth="1.2" /></>,
  <><path d="M5 5l5-3h6l5 5v21H5z" fill="#efefef" /><path d="M7 10h11M7 13h9" stroke="#aaa" strokeWidth="1" /><path d="M7 18h11" stroke="#555" strokeWidth="2" strokeDasharray="2 .8" /></>,
  <><path d="M1.500 4h23v22h-23z" fill="#e4e4e2" stroke="#bbb" /><path d="M4 9h17M4 12h17M4 15h17M4 18h9" stroke="#c7c7c7" strokeWidth=".8" /><path d="M14 20h7" stroke="#59b" /><path d="M17 20l5-1 2 5-4 4-4-2z" fill="#e6bd49" /></>,
  <><path d="M3 7h14v11H3z" fill="#d7e1d7" stroke="#666" /><path d="M18 6h6v17h-6z" fill="#3f4654" /><path d="M19 8h1M21 8h1M19 12h1M21 12h1M19 16h1" stroke="#d7c352" strokeWidth="1.4" /><path d="M1 20h16v3H1z" fill="#666" /><path d="M17 20h6l1 7h-7z" fill="#4f79b7" /></>,
  <><path d="M4 6h19l-2.500 22h-14z" fill="#555" opacity=".75" /><ellipse cx="13.5" cy="5.5" rx="10" ry="3.5" fill="#777" stroke="#aaa" /><path d="M6 6l3-4 3 2 4-3 5 4-2 5H8z" fill="#ddd" /><path d="M8 12l2 15M13 12v15M18 12l-2 15M7 17h13M7 22h12" stroke="#aaa" strokeWidth=".7" /></>,
];

function Dock() {
  return (
    <div className="relative h-[51px] overflow-hidden">
      <svg viewBox="0 0 1024 51" className="absolute inset-0 h-[51px] w-[1024px]">
        <defs>
          <linearGradient id="shelf" x1="0" y1="0" x2="0" y2="1"><stop offset="0" stopColor="#3d3d3d" /><stop offset=".5" stopColor="#6a6a6a" /><stop offset=".72" stopColor="#808080" /><stop offset=".76" stopColor="#aaa" /><stop offset=".86" stopColor="#9c9c9c" /><stop offset=".88" stopColor="#e8e8e8" /><stop offset="1" stopColor="#ededed" /></linearGradient>
          <radialGradient id="glow"><stop offset="0" stopColor="#fff" /><stop offset=".5" stopColor="#a8d8f8" stopOpacity=".9" /><stop offset="1" stopColor="#8cf" stopOpacity="0" /></radialGradient>
        </defs>
        <path d="M22 22h982l11 29H9z" fill="url(#shelf)" />
        {[35, 166, 453, 794, 847].map((x) => <ellipse key={x} cx={x} cy="47" rx="8" ry="6" fill="url(#glow)" />)}
      </svg>
      <div className="relative flex pl-[22px] pt-[9px]">
        {dockIcons.map((d, i) => <I key={i}>{d}</I>)}
        <svg viewBox="0 0 12 30" className="h-[30px] w-[12px] shrink-0"><path d="M5 16h2M4 19h4M4 22h5M3 25h6M3 28h7" stroke="#999" strokeWidth="1.5" /></svg>
        {dockRight.map((d, i) => <I key={i}>{d}</I>)}
      </div>
    </div>
  );
}

/* ---------- callouts ---------- */

const note = "absolute font-['Open_Sans'] text-[16px] leading-[24px] font-bold text-[#ed1c24]";

function Callouts() {
  return (
    <>
      <div className="absolute left-[607px] top-[268px] h-[23px] w-[84px] border-3 border-[#ed1c24]" />
      <div className="absolute left-[314px] top-[373px] h-[21px] w-[69px] border border-[#ed1c24]" />
      <div className="absolute left-[558px] top-[459px] h-[18px] w-[35px] border border-[#ed1c24]" />
      <div className="absolute left-[1086px] top-[634px] h-[30px] w-[79px] border border-[#ed1c24]" />
      <svg viewBox="0 0 1366 768" className="pointer-events-none absolute inset-0 h-[768px] w-[1366px]">
        <path d="M692 278L758 248M593 466L912 423M870 516L931 497" stroke="#ed1c24" strokeWidth="1" fill="none" shapeRendering="crispEdges" />
        <path d="M1132 646c0-1.500 2-1.500 2.300 0l1 4 .2-1.500c1-.8 1.800-.3 2 .6.900-.6 1.700-.2 1.800.7.900-.4 1.600 0 1.600 1v3.500l-1 3.700h-4.500l-2.700-4.500c-.6-1.300.5-2 1.300-1z" fill="#fff" stroke="#111" strokeWidth="1" />
      </svg>
      <Fit className={`${note} left-[766px] top-[237px] w-[189px]`}>kreiramo novi navigator</Fit>
      <Fit className={`${note} left-[305px] top-[392px] w-[110px]`}>biramo ga kao</Fit>
      <Fit className={`${note} left-[305px] top-[415px] w-[68px]`}>primarni</Fit>
      <Fit className={`${note} left-[917px] top-[407px] w-[234px]`}>postavljamo ime u navigatoru</Fit>
      <Fit className={`${note} left-[938px] top-[488px] w-[172px]`}>vec odabrana stranica</Fit>
      <Fit className={`${note} left-[881px] top-[667px] w-[295px]`}>moramo sve sejvovati jedno po jedno</Fit>
    </>
  );
}

export default function App() {
  return (
    <div className="relative flex h-[768px] w-[1366px] overflow-hidden bg-black font-['Liberation_Sans',sans-serif]">
      <div className="w-[171px] shrink-0 pl-[15px] pt-[18px]">
        <Fit className="w-[111px] text-[25px] leading-[33px] text-[#ffcc8c]">[ Playing ]</Fit>
      </div>
      <div className="w-[1024px] shrink-0">
        <div className="flex h-[717px] flex-col overflow-hidden">
          <TitleBar />
          <NavBar />
          <DevBar />
          <div className="flex min-h-0 flex-1 [-webkit-text-stroke-width:.2px]">
            <div className="flex min-w-0 flex-1 flex-col">
              <AdminBar />
              <div className="flex min-h-0 flex-1">
                <Sidebar />
                <Content />
              </div>
            </div>
            <Scrollbar />
          </div>
        </div>
        <Dock />
      </div>
      <Callouts />
    </div>
  );
}
